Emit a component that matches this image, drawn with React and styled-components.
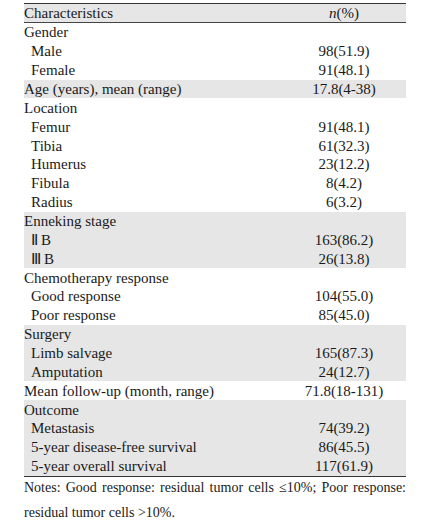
import React from "react"
import styled, { createGlobalStyle, css } from "styled-components"

const GlobalStyle = createGlobalStyle`
  html, body {
    margin: 0;
    padding: 0;
    background: #fff;
  }
  body {
    font-family: "Liberation Serif", "Times New Roman", serif;
    color: #1a1a1a;
  }
`;

const Page = styled.div`
  width: 435px;
  height: 531px;
  padding: 3px 29px 0 24px;
  box-sizing: border-box;
  overflow: hidden;
`;

const Table = styled.div`
  width: 382px;
  border-top: 1.5px solid #333;
  border-bottom: 1.5px solid #333;
`;

const Row = styled.div`
  display: grid;
  grid-template-columns: 258px 1fr;
  height: 18.87px;
  align-items: center;
  font-size: 15px;
  line-height: 18px;
  white-space: nowrap;

  ${props => props.shaded && css`
    background: #e6e6e6;
  `}
`;

const HeaderRow = styled(Row)`
  height: 18px;
  background: #e6e6e6;
  border-bottom: 1.5px solid #444;
`;

const Label = styled.span`
  padding-left: ${props => (props.indent ? "7px" : "0")};
`;

const Value = styled.span`
  text-align: center;
`;

const Notes = styled.p`
  margin: -2px 0 0;
  width: 382px;
  font-size: 14px;
  line-height: 25px;
  text-align: justify;
  text-align-last: left;
`;

const notesText =
  "Notes: Good response: residual tumor cells \u226410%; Poor response: residual tumor cells >10%.";

const groups = [
  { label: "Gender", items: [["Male", "98(51.9)"], ["Female", "91(48.1)"]] },
  { label: "Age (years), mean (range)", value: "17.8(4-38)", shaded: true },
  {
    label: "Location",
    items: [
      ["Femur", "91(48.1)"],
      ["Tibia", "61(32.3)"],
      ["Humerus", "23(12.2)"],
      ["Fibula", "8(4.2)"],
      ["Radius", "6(3.2)"],
    ],
  },
  {
    label: "Enneking stage",
    shaded: true,
    items: [["\u2161\u2009B", "163(86.2)"], ["\u2162\u2009B", "26(13.8)"]],
  },
  {
    label: "Chemotherapy response",
    items: [["Good response", "104(55.0)"], ["Poor response", "85(45.0)"]],
  },
  {
    label: "Surgery",
    shaded: true,
    items: [["Limb salvage", "165(87.3)"], ["Amputation", "24(12.7)"]],
  },
  { label: "Mean follow-up (month, range)", value: "71.8(18-131)" },
  {
    label: "Outcome",
    shaded: true,
    items: [
      ["Metastasis", "74(39.2)"],
      ["5-year disease-free survival", "86(45.5)"],
      ["5-year overall survival", "117(61.9)"],
    ],
  },
];

export default function App() {
  return (
    <Page>
      <GlobalStyle />
      <Table>
        <HeaderRow>
          <Label>Characteristics</Label>
          <Value><i>n</i>(%)</Value>
        </HeaderRow>
        {groups.map(group => (
          <React.Fragment key={group.label}>
            <Row shaded={group.shaded}>
              <Label>{group.label}</Label>
              <Value>{group.value}</Value>
            </Row>
            {(group.items || []).map(([label, value]) => (
              <Row key={label} shaded={group.shaded}>
                <Label indent>{label}</Label>
                <Value>{value}</Value>
              </Row>
            ))}
          </React.Fragment>
        ))}
      </Table>
      <Notes>{notesText}</Notes>
    </Page>
  )
}
